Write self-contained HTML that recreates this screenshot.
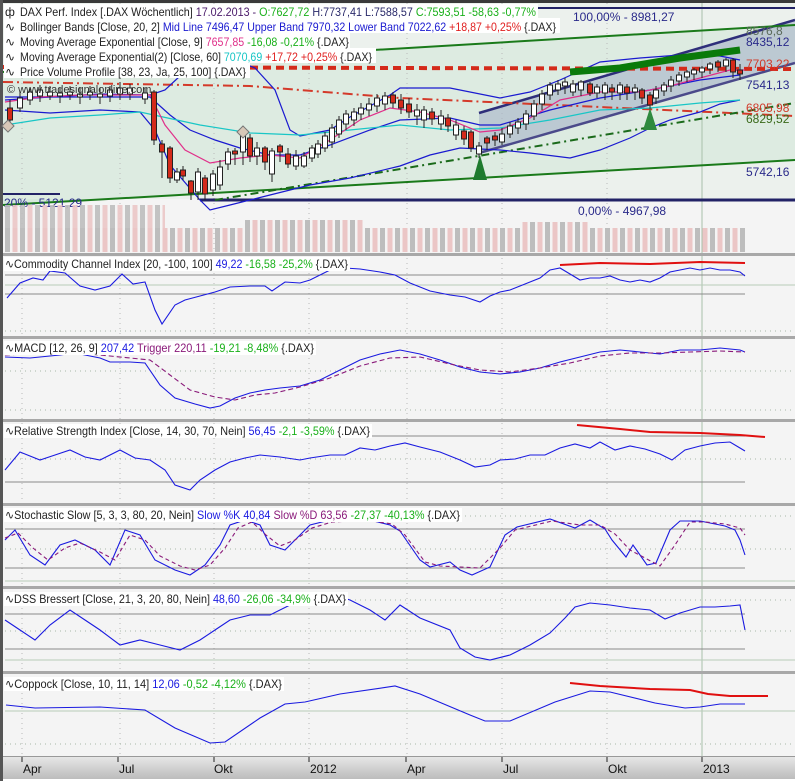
<!DOCTYPE html>
<html><head><meta charset="utf-8"><style>
html,body{margin:0;padding:0;background:#f4f4f4;}
svg{display:block;font-family:"Liberation Sans",sans-serif;}
</style></head><body>
<svg width="795" height="781" viewBox="0 0 795 781" xmlns="http://www.w3.org/2000/svg">
<defs>
<pattern id="vol" x="5" y="0" width="15" height="60" patternUnits="userSpaceOnUse">
<rect x="0" y="0" width="5" height="60" fill="#bdbdbd"/><rect x="7.5" y="0" width="5" height="60" fill="#ebc6c6"/>
</pattern>
<linearGradient id="ax" x1="0" y1="0" x2="0" y2="1"><stop offset="0" stop-color="#e8e8e8"/><stop offset="1" stop-color="#bcbcbc"/></linearGradient>
</defs>
<rect width="795" height="781" fill="#f4f4f4"/>
<rect x="0" y="0" width="795" height="3" fill="#3a3a3a"/>
<rect x="0" y="0" width="3" height="781" fill="#555"/>
<polygon points="3,72 795,25 795,160 3,205" fill="#d6e9dc"/>
<rect x="3" y="3" width="792" height="196" fill="#e3eee6" opacity="0.5"/>
<g stroke="#b9b9b9" stroke-dasharray="1,4">
<line x1="22" y1="3" x2="22" y2="756"/><line x1="120" y1="3" x2="120" y2="756"/><line x1="214" y1="3" x2="214" y2="756"/><line x1="309" y1="3" x2="309" y2="756"/><line x1="407" y1="3" x2="407" y2="756"/><line x1="502" y1="3" x2="502" y2="756"/><line x1="607" y1="3" x2="607" y2="756"/>
</g>
<line x1="702" y1="3" x2="702" y2="756" stroke="#a9c0aa" stroke-width="1"/>
<polygon points="479,113 795,20 795,63 479,153" fill="#a7b3c8" opacity="0.6"/>
<line x1="479" y1="113" x2="795" y2="20" stroke="#2e2e7a" stroke-width="2.5"/>
<line x1="479" y1="153" x2="795" y2="63" stroke="#4b4a8a" stroke-width="2.5"/>
<line x1="3" y1="72" x2="795" y2="25" stroke="#1a7a1a" stroke-width="2"/>
<line x1="3" y1="205" x2="795" y2="160" stroke="#1a7a1a" stroke-width="2"/>
<line x1="140" y1="8" x2="795" y2="8" stroke="#222266" stroke-width="2"/>
<line x1="200" y1="200" x2="795" y2="200" stroke="#222266" stroke-width="3"/>
<line x1="3" y1="194" x2="60" y2="194" stroke="#222266" stroke-width="2"/>
<line x1="3" y1="67" x2="795" y2="69" stroke="#d42a1a" stroke-width="4" stroke-dasharray="8,5"/>
<polyline points="3,82 250,86 400,98 600,107 795,116" fill="none" stroke="#d43a2a" stroke-width="2" stroke-dasharray="10,4,2,4"/>
<line x1="215" y1="200" x2="795" y2="103" stroke="#1a6a1a" stroke-width="2" stroke-dasharray="8,4,2,4"/>
<g fill="none" stroke="#1a1ad0" stroke-width="1.2">
<polyline points="5,100 50,97 100,94 150,95 165,90 180,76 250,66 255,68 275,90 290,130 300,136 330,130 350,117 390,95 400,88 450,88 500,98 530,92 560,80 600,62 640,58 680,55 720,56 740,60"/>
<polyline points="5,110 50,113 100,110 140,112 155,130 170,165 200,200 210,210 230,205 270,195 290,190 310,185 350,178 400,166 430,155 460,148 500,150 530,153 570,158 600,150 630,138 650,128 670,120 700,112 720,104 740,100"/>
<polyline points="5,97 150,97 170,115 190,130 215,140 240,148 270,155 300,155 330,145 370,130 400,120 450,118 480,125 500,125 550,110 600,98 650,90 700,80 740,75"/>
</g>
<polyline points="5,125 50,118 100,115 140,112 200,125 250,133 300,135 350,130 400,125 450,130 500,128 550,120 600,110 650,108 700,103 740,100" fill="none" stroke="#19c6c6" stroke-width="1.2"/>
<polyline points="5,102 40,97 80,95 120,95 150,95 165,125 185,150 210,163 240,158 270,155 300,158 330,140 360,120 390,108 420,112 450,120 480,132 500,130 530,118 560,100 600,92 640,92 670,86 700,78 730,70 745,70" fill="none" stroke="#e0308a" stroke-width="1.2"/>
<g stroke="#222" stroke-width="1">
<line x1="10" y1="100" x2="10" y2="125"/><rect x="7.5" y="108" width="5" height="12" fill="#d42a1a"/>
<line x1="20" y1="92" x2="20" y2="112"/><rect x="17.5" y="98" width="5" height="10" fill="#fff"/>
<line x1="30" y1="88" x2="30" y2="105"/><rect x="27.5" y="92" width="5" height="8" fill="#fff"/>
<line x1="40" y1="85" x2="40" y2="102"/><rect x="37.5" y="90" width="5" height="6" fill="#fff"/>
<line x1="50" y1="86" x2="50" y2="100"/><rect x="47.5" y="92" width="5" height="4" fill="#fff"/>
<line x1="60" y1="88" x2="60" y2="103"/><rect x="57.5" y="93" width="5" height="3" fill="#fff"/>
<line x1="70" y1="86" x2="70" y2="100"/><rect x="67.5" y="92" width="5" height="3" fill="#fff"/>
<line x1="80" y1="88" x2="80" y2="104"/><rect x="77.5" y="94" width="5" height="3" fill="#fff"/>
<line x1="90" y1="86" x2="90" y2="100"/><rect x="87.5" y="92" width="5" height="3" fill="#fff"/>
<line x1="100" y1="88" x2="100" y2="104"/><rect x="97.5" y="94" width="5" height="3" fill="#fff"/>
<line x1="110" y1="86" x2="110" y2="102"/><rect x="107.5" y="90" width="5" height="6" fill="#fff"/>
<line x1="120" y1="82" x2="120" y2="100"/><rect x="117.5" y="88" width="5" height="6" fill="#fff"/>
<line x1="130" y1="84" x2="130" y2="100"/><rect x="127.5" y="88" width="5" height="6" fill="#fff"/>
<line x1="145" y1="88" x2="145" y2="104"/><rect x="142.5" y="93" width="5" height="6" fill="#fff"/>
<line x1="154" y1="90" x2="154" y2="145"/><rect x="151.5" y="92" width="5" height="48" fill="#d42a1a"/>
<line x1="162" y1="140" x2="162" y2="178"/><rect x="159.5" y="144" width="5" height="8" fill="#d42a1a"/>
<line x1="170" y1="146" x2="170" y2="183"/><rect x="167.5" y="148" width="5" height="30" fill="#d42a1a"/>
<line x1="177" y1="168" x2="177" y2="183"/><rect x="174.5" y="172" width="5" height="8" fill="#fff"/>
<line x1="183" y1="166" x2="183" y2="180"/><rect x="180.5" y="170" width="5" height="6" fill="#d42a1a"/>
<line x1="191" y1="180" x2="191" y2="200"/><rect x="188.5" y="181" width="5" height="12" fill="#d42a1a"/>
<line x1="198" y1="168" x2="198" y2="200"/><rect x="195.5" y="172" width="5" height="20" fill="#fff"/>
<line x1="205" y1="175" x2="205" y2="200"/><rect x="202.5" y="178" width="5" height="16" fill="#d42a1a"/>
<line x1="213" y1="170" x2="213" y2="196"/><rect x="210.5" y="174" width="5" height="16" fill="#fff"/>
<line x1="220" y1="160" x2="220" y2="190"/><rect x="217.5" y="167" width="5" height="18" fill="#fff"/>
<line x1="228" y1="148" x2="228" y2="170"/><rect x="225.5" y="152" width="5" height="12" fill="#fff"/>
<line x1="235" y1="148" x2="235" y2="165"/><rect x="232.5" y="151" width="5" height="3" fill="#d42a1a"/>
<line x1="243" y1="132" x2="243" y2="165"/><rect x="240.5" y="136" width="5" height="16" fill="#fff"/>
<line x1="250" y1="134" x2="250" y2="162"/><rect x="247.5" y="138" width="5" height="18" fill="#d42a1a"/>
<line x1="257" y1="142" x2="257" y2="165"/><rect x="254.5" y="148" width="5" height="8" fill="#fff"/>
<line x1="265" y1="146" x2="265" y2="170"/><rect x="262.5" y="148" width="5" height="14" fill="#d42a1a"/>
<line x1="272" y1="148" x2="272" y2="182"/><rect x="269.5" y="151" width="5" height="23" fill="#fff"/>
<line x1="280" y1="144" x2="280" y2="162"/><rect x="277.5" y="146" width="5" height="6" fill="#d42a1a"/>
<line x1="288" y1="148" x2="288" y2="168"/><rect x="285.5" y="154" width="5" height="10" fill="#d42a1a"/>
<line x1="296" y1="150" x2="296" y2="170"/><rect x="293.5" y="156" width="5" height="10" fill="#fff"/>
<line x1="304" y1="152" x2="304" y2="168"/><rect x="301.5" y="156" width="5" height="10" fill="#fff"/>
<line x1="312" y1="145" x2="312" y2="162"/><rect x="309.5" y="148" width="5" height="10" fill="#fff"/>
<line x1="318" y1="140" x2="318" y2="158"/><rect x="315.5" y="144" width="5" height="10" fill="#fff"/>
<line x1="325" y1="132" x2="325" y2="152"/><rect x="322.5" y="136" width="5" height="12" fill="#fff"/>
<line x1="332" y1="124" x2="332" y2="148"/><rect x="329.5" y="128" width="5" height="14" fill="#fff"/>
<line x1="339" y1="116" x2="339" y2="138"/><rect x="336.5" y="120" width="5" height="14" fill="#fff"/>
<line x1="346" y1="110" x2="346" y2="130"/><rect x="343.5" y="114" width="5" height="10" fill="#fff"/>
<line x1="354" y1="108" x2="354" y2="126"/><rect x="351.5" y="112" width="5" height="8" fill="#fff"/>
<line x1="361" y1="103" x2="361" y2="120"/><rect x="358.5" y="108" width="5" height="6" fill="#fff"/>
<line x1="369" y1="98" x2="369" y2="116"/><rect x="366.5" y="104" width="5" height="6" fill="#fff"/>
<line x1="377" y1="94" x2="377" y2="112"/><rect x="374.5" y="98" width="5" height="8" fill="#fff"/>
<line x1="385" y1="92" x2="385" y2="110"/><rect x="382.5" y="96" width="5" height="8" fill="#fff"/>
<line x1="393" y1="92" x2="393" y2="108"/><rect x="390.5" y="95" width="5" height="8" fill="#d42a1a"/>
<line x1="401" y1="94" x2="401" y2="114"/><rect x="398.5" y="100" width="5" height="8" fill="#d42a1a"/>
<line x1="409" y1="98" x2="409" y2="118"/><rect x="406.5" y="104" width="5" height="8" fill="#d42a1a"/>
<line x1="417" y1="104" x2="417" y2="125"/><rect x="414.5" y="110" width="5" height="6" fill="#fff"/>
<line x1="424" y1="106" x2="424" y2="128"/><rect x="421.5" y="110" width="5" height="10" fill="#fff"/>
<line x1="432" y1="108" x2="432" y2="125"/><rect x="429.5" y="112" width="5" height="7" fill="#d42a1a"/>
<line x1="441" y1="110" x2="441" y2="130"/><rect x="438.5" y="116" width="5" height="8" fill="#fff"/>
<line x1="448" y1="114" x2="448" y2="132"/><rect x="445.5" y="118" width="5" height="8" fill="#d42a1a"/>
<line x1="456" y1="120" x2="456" y2="140"/><rect x="453.5" y="125" width="5" height="10" fill="#fff"/>
<line x1="464" y1="126" x2="464" y2="145"/><rect x="461.5" y="131" width="5" height="8" fill="#d42a1a"/>
<line x1="471" y1="130" x2="471" y2="152"/><rect x="468.5" y="132" width="5" height="16" fill="#d42a1a"/>
<line x1="479" y1="142" x2="479" y2="158"/><rect x="476.5" y="146" width="5" height="8" fill="#fff"/>
<line x1="487" y1="136" x2="487" y2="150"/><rect x="484.5" y="138" width="5" height="5" fill="#d42a1a"/>
<line x1="495" y1="132" x2="495" y2="146"/><rect x="492.5" y="136" width="5" height="4" fill="#d42a1a"/>
<line x1="502" y1="128" x2="502" y2="145"/><rect x="499.5" y="134" width="5" height="8" fill="#fff"/>
<line x1="510" y1="122" x2="510" y2="138"/><rect x="507.5" y="126" width="5" height="8" fill="#fff"/>
<line x1="518" y1="118" x2="518" y2="134"/><rect x="515.5" y="122" width="5" height="6" fill="#fff"/>
<line x1="526" y1="110" x2="526" y2="130"/><rect x="523.5" y="114" width="5" height="10" fill="#fff"/>
<line x1="534" y1="100" x2="534" y2="120"/><rect x="531.5" y="104" width="5" height="12" fill="#fff"/>
<line x1="542" y1="90" x2="542" y2="110"/><rect x="539.5" y="94" width="5" height="10" fill="#fff"/>
<line x1="550" y1="82" x2="550" y2="100"/><rect x="547.5" y="85" width="5" height="10" fill="#fff"/>
<line x1="558" y1="80" x2="558" y2="95"/><rect x="555.5" y="84" width="5" height="6" fill="#fff"/>
<line x1="565" y1="78" x2="565" y2="94"/><rect x="562.5" y="82" width="5" height="4" fill="#fff"/>
<line x1="573" y1="80" x2="573" y2="96"/><rect x="570.5" y="84" width="5" height="8" fill="#fff"/>
<line x1="581" y1="80" x2="581" y2="96"/><rect x="578.5" y="82" width="5" height="8" fill="#fff"/>
<line x1="590" y1="82" x2="590" y2="96"/><rect x="587.5" y="84" width="5" height="9" fill="#d42a1a"/>
<line x1="597" y1="84" x2="597" y2="98"/><rect x="594.5" y="87" width="5" height="6" fill="#fff"/>
<line x1="605" y1="82" x2="605" y2="100"/><rect x="602.5" y="85" width="5" height="8" fill="#fff"/>
<line x1="612" y1="84" x2="612" y2="100"/><rect x="609.5" y="88" width="5" height="4" fill="#d42a1a"/>
<line x1="620" y1="82" x2="620" y2="100"/><rect x="617.5" y="85" width="5" height="8" fill="#fff"/>
<line x1="627" y1="84" x2="627" y2="100"/><rect x="624.5" y="87" width="5" height="6" fill="#d42a1a"/>
<line x1="635" y1="84" x2="635" y2="100"/><rect x="632.5" y="88" width="5" height="4" fill="#fff"/>
<line x1="642" y1="88" x2="642" y2="104"/><rect x="639.5" y="90" width="5" height="8" fill="#d42a1a"/>
<line x1="650" y1="92" x2="650" y2="110"/><rect x="647.5" y="95" width="5" height="10" fill="#d42a1a"/>
<line x1="656" y1="86" x2="656" y2="104"/><rect x="653.5" y="90" width="5" height="8" fill="#fff"/>
<line x1="664" y1="82" x2="664" y2="96"/><rect x="661.5" y="85" width="5" height="6" fill="#fff"/>
<line x1="671" y1="76" x2="671" y2="92"/><rect x="668.5" y="80" width="5" height="6" fill="#fff"/>
<line x1="679" y1="72" x2="679" y2="86"/><rect x="676.5" y="75" width="5" height="6" fill="#fff"/>
<line x1="687" y1="70" x2="687" y2="82"/><rect x="684.5" y="72" width="5" height="5" fill="#fff"/>
<line x1="694" y1="68" x2="694" y2="80"/><rect x="691.5" y="70" width="5" height="4" fill="#fff"/>
<line x1="702" y1="66" x2="702" y2="78"/><rect x="699.5" y="68" width="5" height="4" fill="#fff"/>
<line x1="710" y1="62" x2="710" y2="74"/><rect x="707.5" y="64" width="5" height="5" fill="#fff"/>
<line x1="718" y1="60" x2="718" y2="72"/><rect x="715.5" y="62" width="5" height="5" fill="#d42a1a"/>
<line x1="726" y1="58" x2="726" y2="72"/><rect x="723.5" y="60" width="5" height="6" fill="#fff"/>
<line x1="733" y1="58" x2="733" y2="78"/><rect x="730.5" y="60" width="5" height="12" fill="#d42a1a"/>
<line x1="740" y1="64" x2="740" y2="80"/><rect x="737.5" y="70" width="5" height="4" fill="#d42a1a"/>
</g>
<polygon points="8,120 14,126 8,132 2,126" fill="#d8c8b8" stroke="#777"/>
<polygon points="243,126 249,132 243,138 237,132" fill="#d8c8b8" stroke="#777"/>
<polyline points="570,72 620,68 680,58 740,50" fill="none" stroke="#0a7a0a" stroke-width="7"/>
<polygon points="480,155 487,180 473,180" fill="#1e7a2e"/>
<polygon points="650,108 657,130 643,130" fill="#2e8a3e"/>
<g font-size="12" fill="#2a2a8a">
<text x="573" y="21">100,00% - 8981,27</text>
<text x="578" y="215">0,00% - 4967,98</text>
<text x="4" y="207">20% - 5121,29</text>
<text x="746" y="35" fill="#5a6a5a">8576,8</text>
<text x="746" y="46">8435,12</text>
<text x="746" y="68" fill="#d03a2a">7703,22</text>
<text x="746" y="89">7541,13</text>
<text x="746" y="112" fill="#d03a2a">6805,98</text>
<text x="746" y="123" fill="#3a6a1a">6829,52</text>
<text x="746" y="176">5742,16</text>
</g>
<rect x="4" y="4" width="534" height="14" fill="#fff"/>
<rect x="4" y="18" width="556" height="15" fill="#fff"/>
<rect x="4" y="33" width="346" height="15" fill="#fff"/>
<rect x="4" y="48" width="372" height="15" fill="#fff"/>
<rect x="4" y="63" width="246" height="15" fill="#fff"/>
<g font-size="12" fill="#222">
<text x="20" y="16" textLength="516" lengthAdjust="spacingAndGlyphs">DAX Perf. Index [.DAX  Wöchentlich] <tspan fill="#4a1a6a">17.02.2013 - </tspan><tspan fill="#1ab01a">O:7627,72</tspan> <tspan fill="#2a2a6a">H:7737,41 L:7588,57</tspan> <tspan fill="#1ab01a">C:7593,51 -58,63 -0,77%</tspan></text>
<text x="20" y="31" textLength="536" lengthAdjust="spacingAndGlyphs">Bollinger Bands [Close, 20, 2] <tspan fill="#1a1ad0">Mid Line 7496,47 Upper Band 7970,32 Lower Band 7022,62</tspan> <tspan fill="#e02020">+18,87 +0,25%</tspan> {.DAX}</text>
<text x="20" y="46" textLength="329" lengthAdjust="spacingAndGlyphs">Moving Average Exponential [Close, 9] <tspan fill="#e0308a">7657,85</tspan> <tspan fill="#1ab01a">-16,08 -0,21%</tspan> {.DAX}</text>
<text x="20" y="61" textLength="352" lengthAdjust="spacingAndGlyphs">Moving Average Exponential(2) [Close, 60] <tspan fill="#19c6c6">7070,69</tspan> <tspan fill="#e02020">+17,72 +0,25%</tspan> {.DAX}</text>
<text x="20" y="76" textLength="226" lengthAdjust="spacingAndGlyphs">Price Volume Profile [38, 23, Ja, 25, 100] {.DAX}</text>
<text x="7" y="93" font-size="11" fill="#333">© www.tradesignalonline.com</text>
<text x="5" y="16">ф</text>
<text x="5" y="31">∿</text><text x="5" y="46">∿</text><text x="5" y="61">∿</text><text x="5" y="76">∿</text>
</g>
<rect x="5" y="228" width="740" height="24" fill="url(#vol)"/>
<rect x="5" y="205" width="160" height="23" fill="url(#vol)" opacity="0.9"/>
<rect x="245" y="220" width="120" height="8" fill="url(#vol)"/>
<rect x="520" y="222" width="70" height="6" fill="url(#vol)"/>
<g fill="#a8a8a8">
<rect x="3" y="253" width="792" height="3"/>
<rect x="3" y="336" width="792" height="3"/>
<rect x="3" y="419" width="792" height="3"/>
<rect x="3" y="503" width="792" height="3"/>
<rect x="3" y="586" width="792" height="3"/>
<rect x="3" y="671" width="792" height="3"/>
</g>
<g stroke="#8a8a8a" stroke-width="1">
<line x1="5" y1="275" x2="745" y2="275"/><line x1="5" y1="294" x2="745" y2="294"/>
<line x1="5" y1="436" x2="745" y2="436"/><line x1="5" y1="482" x2="745" y2="482"/>
<line x1="5" y1="529" x2="745" y2="529"/><line x1="5" y1="568" x2="745" y2="568"/>
<line x1="5" y1="614" x2="745" y2="614"/><line x1="5" y1="649" x2="745" y2="649"/>
</g>
<g stroke="#b8ccb8" stroke-width="1">
<line x1="5" y1="285" x2="795" y2="285"/><line x1="5" y1="711" x2="795" y2="711"/><line x1="5" y1="581" x2="795" y2="581"/><line x1="5" y1="660" x2="795" y2="660"/>
</g>
<g stroke="#a8b8a8" stroke-dasharray="1,4">
<line x1="5" y1="331" x2="795" y2="331"/><line x1="5" y1="371" x2="795" y2="371"/><line x1="5" y1="410" x2="795" y2="410"/>
<line x1="5" y1="459" x2="795" y2="459"/><line x1="5" y1="549" x2="795" y2="549"/><line x1="5" y1="516" x2="795" y2="516"/>
<line x1="5" y1="631" x2="795" y2="631"/><line x1="5" y1="600" x2="795" y2="600"/><line x1="5" y1="744" x2="795" y2="744"/>
</g>
<g fill="none" stroke="#1a1ae0" stroke-width="1.1">
<polyline points="7,298 20,283 33,278 43,280 50,271 65,273 80,286 95,290 110,286 122,274 133,284 145,282 155,310 162,324 175,305 185,300 200,296 215,292 230,287 250,286 265,286 272,291 285,282 300,283 310,280 330,270 345,268 360,269 380,272 395,275 410,283 430,291 450,295 465,297 480,302 490,296 500,292 510,290 520,286 530,282 540,278 550,270 560,268 570,274 580,280 590,278 600,278 610,276 620,280 630,282 640,280 650,282 660,278 670,272 680,270 690,268 700,270 710,268 720,270 730,270 740,272 745,276"/>
<polyline points="5,357 30,358 60,355 75,353 100,358 110,362 130,362 145,363 160,385 175,398 195,404 210,408 220,406 235,398 250,393 265,390 280,388 300,386 320,380 340,370 360,360 380,354 400,350 420,354 440,360 460,367 480,372 500,374 520,372 540,368 560,362 580,357 600,352 620,350 640,352 660,354 680,350 700,350 720,348 740,350 745,352"/>
<polyline points="5,470 20,452 40,460 55,455 70,450 85,457 100,460 120,450 135,458 150,460 165,470 175,485 190,490 200,480 215,470 230,462 245,458 260,455 280,457 300,460 310,458 330,455 345,455 360,448 375,450 390,446 405,443 420,447 440,452 460,460 475,467 490,465 500,460 515,459 530,455 545,455 560,448 575,444 590,448 600,442 615,450 630,446 645,449 660,454 672,460 685,450 700,446 715,443 730,442 740,448 745,451"/>
<polyline points="5,540 15,530 30,555 45,565 60,545 75,540 95,550 110,565 125,530 140,535 155,560 175,570 190,575 205,565 220,545 230,525 245,520 260,525 270,545 285,550 300,535 310,525 330,520 350,520 370,520 390,525 400,531 420,560 430,567 450,562 460,570 472,575 490,567 505,535 517,527 550,519 575,528 590,520 605,529 612,540 626,557 633,545 647,565 656,563 670,530 680,521 700,521 725,526 735,530 740,540 745,555"/>
<polyline points="5,620 20,630 35,640 50,625 70,610 85,620 100,630 120,645 140,640 160,645 180,650 200,640 215,630 230,620 250,615 270,615 290,605 305,600 315,595 335,595 350,600 370,610 385,620 400,605 420,618 450,630 460,648 475,657 490,660 510,655 530,645 550,633 565,618 575,607 590,603 610,605 630,608 650,610 665,619 680,613 700,607 715,607 730,606 740,605 745,630"/>
<polyline points="6,705 35,708 100,707 145,710 175,728 210,743 225,742 260,718 285,704 305,702 340,694 395,686 420,694 470,715 485,721 510,721 555,702 590,691 610,692 655,703 685,708 700,707 720,704 745,704"/>
</g>
<polyline points="5,355 40,353 70,352 100,355 150,360 170,375 190,390 215,397 235,400 255,395 275,393 300,387 330,378 360,366 390,358 420,357 450,364 480,370 510,372 540,368 570,363 600,356 630,353 660,353 690,352 720,351 745,352" fill="none" stroke="#8a1a7a" stroke-width="1.1" stroke-dasharray="5,3"/>
<polyline points="5,538 18,533 33,548 48,560 65,548 80,543 100,552 115,560 130,535 145,540 160,556 180,566 195,570 210,565 225,548 238,528 252,522 266,535 280,546 295,540 312,528 332,522 352,521 372,521 392,524 405,535 425,562 440,566 460,567 480,568 500,548 515,530 552,521 580,525 600,525 615,534 630,550 645,558 660,566 675,545 690,522 705,522 725,524 740,528 745,535" fill="none" stroke="#8a1a7a" stroke-width="1.1" stroke-dasharray="4,3"/>
<g fill="none" stroke="#e01010" stroke-width="2">
<polyline points="560,265 600,263 650,264 700,262 745,263"/>
<polyline points="577,425 620,429 650,432 700,433 740,435 765,437"/>
<polyline points="570,683 600,686 650,689 690,690 708,694 730,696 768,696"/>
</g>
<rect x="4" y="257" width="346" height="14" fill="#fff"/>
<rect x="4" y="341" width="312" height="14" fill="#fff"/>
<rect x="4" y="424" width="368" height="14" fill="#fff"/>
<rect x="4" y="508" width="458" height="14" fill="#fff"/>
<rect x="4" y="592" width="344" height="14" fill="#fff"/>
<rect x="4" y="677" width="280" height="14" fill="#fff"/>
<g font-size="12" fill="#222">
<text x="5" y="268" textLength="343" lengthAdjust="spacingAndGlyphs">∿Commodity Channel Index [20, -100, 100] <tspan fill="#1a1ae0">49,22</tspan> <tspan fill="#1ab01a">-16,58 -25,2%</tspan> {.DAX}</text>
<text x="5" y="352" textLength="309" lengthAdjust="spacingAndGlyphs">∿MACD [12, 26, 9] <tspan fill="#1a1ae0">207,42</tspan> <tspan fill="#8a1a7a">Trigger 220,11</tspan> <tspan fill="#1ab01a">-19,21 -8,48%</tspan> {.DAX}</text>
<text x="5" y="435" textLength="365" lengthAdjust="spacingAndGlyphs">∿Relative Strength Index [Close, 14, 30, 70, Nein] <tspan fill="#1a1ae0">56,45</tspan> <tspan fill="#1ab01a">-2,1 -3,59%</tspan> {.DAX}</text>
<text x="5" y="519" textLength="455" lengthAdjust="spacingAndGlyphs">∿Stochastic Slow [5, 3, 3, 80, 20, Nein] <tspan fill="#1a1ae0">Slow %K 40,84</tspan> <tspan fill="#8a1a7a">Slow %D 63,56</tspan> <tspan fill="#1ab01a">-27,37 -40,13%</tspan> {.DAX}</text>
<text x="5" y="603" textLength="341" lengthAdjust="spacingAndGlyphs">∿DSS Bressert [Close, 21, 3, 20, 80, Nein] <tspan fill="#1a1ae0">48,60</tspan> <tspan fill="#1ab01a">-26,06 -34,9%</tspan> {.DAX}</text>
<text x="5" y="688" textLength="277" lengthAdjust="spacingAndGlyphs">∿Coppock [Close, 10, 11, 14] <tspan fill="#1a1ae0">12,06</tspan> <tspan fill="#1ab01a">-0,52 -4,12%</tspan> {.DAX}</text>
</g>
<rect x="3" y="756" width="792" height="23" fill="url(#ax)"/>
<rect x="3" y="756" width="792" height="1" fill="#999"/>
<rect x="3" y="779" width="792" height="2" fill="#fff"/>
<g stroke="#222"><line x1="22" y1="757" x2="22" y2="762"/><line x1="118" y1="757" x2="118" y2="762"/><line x1="214" y1="757" x2="214" y2="762"/><line x1="309" y1="757" x2="309" y2="762"/><line x1="406" y1="757" x2="406" y2="762"/><line x1="502" y1="757" x2="502" y2="762"/><line x1="607" y1="757" x2="607" y2="762"/><line x1="702" y1="757" x2="702" y2="762"/></g>
<g font-size="12" fill="#111">
<text x="23" y="773">Apr</text><text x="119" y="773">Jul</text><text x="214" y="773">Okt</text><text x="310" y="773">2012</text><text x="407" y="773">Apr</text><text x="503" y="773">Jul</text><text x="608" y="773">Okt</text><text x="703" y="773">2013</text>
</g>
</svg>
</body></html>
